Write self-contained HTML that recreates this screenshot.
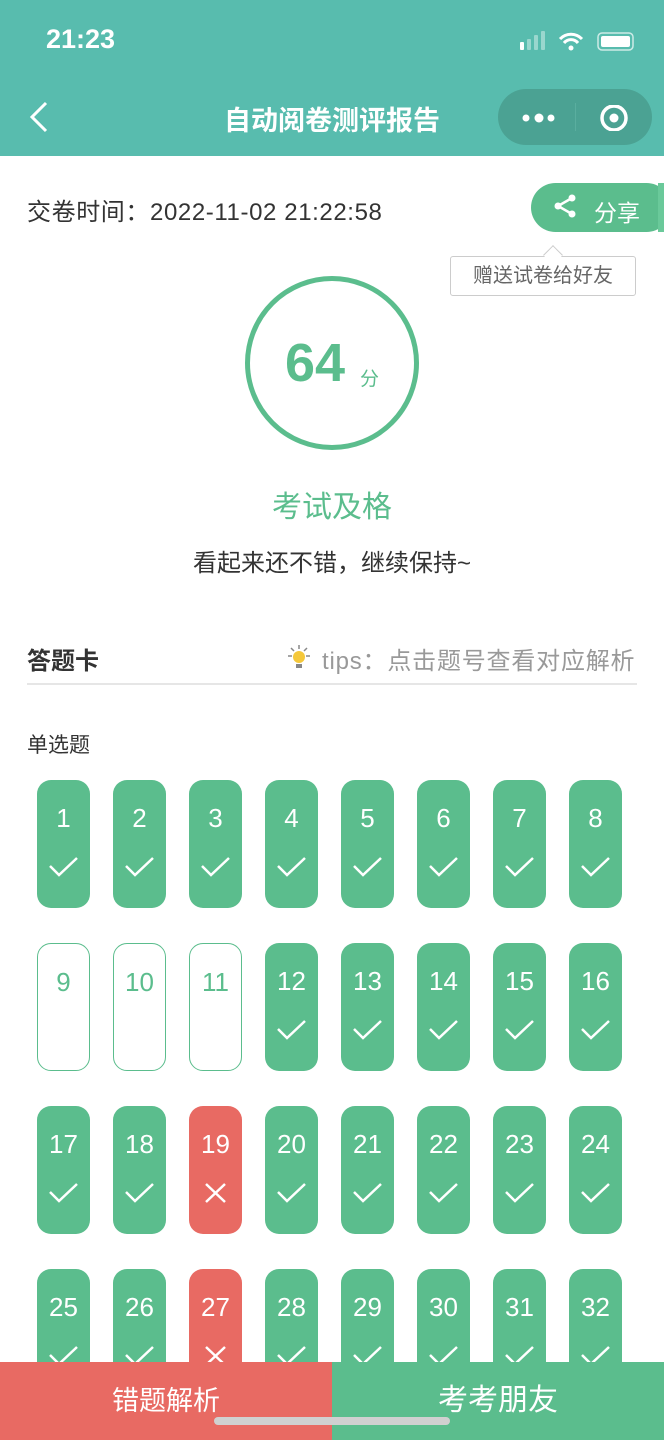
<!DOCTYPE html>
<html><head><meta charset="utf-8"><style>
*{margin:0;padding:0;box-sizing:border-box}
body{width:664px;height:1440px;position:relative;overflow:hidden;background:#fff;font-family:"Liberation Sans","Noto Sans CJK SC",sans-serif}
.a{position:absolute}
.hdr{left:0;top:0;width:664px;height:156px;background:#58bcae}
.t{position:absolute;width:53px;height:128px;border-radius:14px;background:#5bbd8d;color:#fff;text-align:center}
.t b{display:block;font-weight:normal;font-size:26px;line-height:26px;margin-top:25px}
.t svg{position:absolute;left:11px;top:76px}
.o{background:#fff;border:1.5px solid #5bbd8d;color:#5bbd8d}
.r{background:#e86a63}
</style></head><body>
<div class="a hdr"></div>
<div class="a" style="left:46px;top:24px;color:#fff;font-size:27px;font-weight:bold">21:23</div>
<svg class="a" style="left:518px;top:30px" width="120" height="24">
<rect x="2" y="12" width="4" height="8" rx="1" fill="#fff"/><rect x="9" y="9" width="4" height="11" rx="1" fill="#fff" opacity=".4"/><rect x="16" y="5" width="4" height="15" rx="1" fill="#fff" opacity=".4"/><rect x="23" y="1" width="4" height="19" rx="1" fill="#fff" opacity=".4"/>
<path d="M42 9a15 15 0 0 1 22 0M46 13a9 9 0 0 1 14 0" stroke="#fff" stroke-width="3" fill="none"/><circle cx="53" cy="18" r="2.5" fill="#fff"/>
<rect x="80" y="3" width="35" height="17" rx="4" fill="none" stroke="#fff" stroke-width="1.5" opacity=".7"/><rect x="83" y="6" width="29" height="11" rx="2" fill="#fff"/>
</svg>
<svg class="a" style="left:28px;top:100px" width="22" height="34"><path d="M18 3L4 17l14 14" stroke="#fff" stroke-width="3" fill="none"/></svg>
<div class="a" style="left:0;width:664px;top:99px;text-align:center;color:#fff;font-size:27px;font-weight:bold">自动阅卷测评报告</div>
<div class="a" style="left:498px;top:89px;width:154px;height:56px;border-radius:28px;background:#4ba293"></div>
<div class="a" style="left:575px;top:103px;width:1px;height:28px;background:#5aae9f"></div>
<svg class="a" style="left:518px;top:105px" width="120" height="26"><circle cx="8" cy="13" r="3.5" fill="#fff"/><circle cx="21" cy="13" r="4.5" fill="#fff"/><circle cx="33" cy="13" r="3.5" fill="#fff"/><circle cx="96" cy="13" r="12" fill="none" stroke="#fff" stroke-width="3.5"/><circle cx="96" cy="13" r="4.5" fill="#fff"/></svg>
<div class="a" style="left:27px;top:192px;font-size:24px;color:#333;letter-spacing:0.6px">交卷时间：2022-11-02 21:22:58</div>
<div class="a" style="left:531px;top:183px;width:140px;height:49px;border-radius:25px;background:#5bbd8d"></div>
<div class="a" style="left:658px;top:183px;width:6px;height:49px;background:#6ac99a"></div>
<svg class="a" style="left:553px;top:193px" width="26" height="26"><circle cx="19" cy="5" r="3.5" fill="#fff"/><circle cx="5" cy="13" r="3.5" fill="#fff"/><circle cx="19" cy="21" r="3.5" fill="#fff"/><path d="M19 5L5 13l14 8" stroke="#fff" stroke-width="2.5" fill="none"/></svg>
<div class="a" style="left:594px;top:194px;font-size:23px;color:#fff">分享</div>
<div class="a" style="left:450px;top:256px;width:186px;height:40px;border:1px solid #ccc;border-radius:3px;background:#fff;font-size:20px;color:#666;text-align:center;line-height:38px">赠送试卷给好友</div>
<div class="a" style="left:546px;top:248px;width:14px;height:14px;background:#fff;border-left:1px solid #ccc;border-top:1px solid #ccc;transform:rotate(45deg)"></div>
<div class="a" style="left:245px;top:276px;width:174px;height:174px;border-radius:50%;border:5px solid #5bbd8d"></div>
<div class="a" style="left:285px;top:332px;font-size:54px;color:#5bbd8d;font-weight:bold">64</div>
<div class="a" style="left:360px;top:364px;font-size:19px;color:#5bbd8d">分</div>
<div class="a" style="left:0;width:664px;top:482px;text-align:center;font-size:30px;color:#5bbd8d">考试及格</div>
<div class="a" style="left:0;width:664px;top:543px;text-align:center;font-size:24px;color:#333">看起来还不错，继续保持~</div>
<div class="a" style="left:27px;top:641px;font-size:24px;font-weight:bold;color:#333">答题卡</div>
<svg class="a" style="left:284px;top:643px" width="30" height="30"><path d="M15 2v4M4 13h4M22 13h4M7 5l3 3M23 5l-3 3" stroke="#888" stroke-width="1.5"/><circle cx="15" cy="14" r="6" fill="#f5c83a"/><rect x="12" y="21" width="6" height="4" fill="#888"/></svg>
<div class="a" style="left:322px;top:641px;font-size:24px;color:#999;letter-spacing:0.8px">tips：点击题号查看对应解析</div>
<div class="a" style="left:27px;top:683px;width:610px;height:2px;background:#e6e6e6"></div>
<div class="a" style="left:27px;top:729px;font-size:21px;color:#333">单选题</div>

<div class="a" style="left:0;top:780px">
<div class="t" style="left:37px"><b>1</b><svg width="31" height="22"><path d="M2 10l9 9L29 2" stroke="#fff" stroke-width="2.5" fill="none"/></svg></div>
<div class="t" style="left:113px"><b>2</b><svg width="31" height="22"><path d="M2 10l9 9L29 2" stroke="#fff" stroke-width="2.5" fill="none"/></svg></div>
<div class="t" style="left:189px"><b>3</b><svg width="31" height="22"><path d="M2 10l9 9L29 2" stroke="#fff" stroke-width="2.5" fill="none"/></svg></div>
<div class="t" style="left:265px"><b>4</b><svg width="31" height="22"><path d="M2 10l9 9L29 2" stroke="#fff" stroke-width="2.5" fill="none"/></svg></div>
<div class="t" style="left:341px"><b>5</b><svg width="31" height="22"><path d="M2 10l9 9L29 2" stroke="#fff" stroke-width="2.5" fill="none"/></svg></div>
<div class="t" style="left:417px"><b>6</b><svg width="31" height="22"><path d="M2 10l9 9L29 2" stroke="#fff" stroke-width="2.5" fill="none"/></svg></div>
<div class="t" style="left:493px"><b>7</b><svg width="31" height="22"><path d="M2 10l9 9L29 2" stroke="#fff" stroke-width="2.5" fill="none"/></svg></div>
<div class="t" style="left:569px"><b>8</b><svg width="31" height="22"><path d="M2 10l9 9L29 2" stroke="#fff" stroke-width="2.5" fill="none"/></svg></div>
</div>
<div class="a" style="left:0;top:943px">
<div class="t o" style="left:37px"><b>9</b></div>
<div class="t o" style="left:113px"><b>10</b></div>
<div class="t o" style="left:189px"><b>11</b></div>
<div class="t" style="left:265px"><b>12</b><svg width="31" height="22"><path d="M2 10l9 9L29 2" stroke="#fff" stroke-width="2.5" fill="none"/></svg></div>
<div class="t" style="left:341px"><b>13</b><svg width="31" height="22"><path d="M2 10l9 9L29 2" stroke="#fff" stroke-width="2.5" fill="none"/></svg></div>
<div class="t" style="left:417px"><b>14</b><svg width="31" height="22"><path d="M2 10l9 9L29 2" stroke="#fff" stroke-width="2.5" fill="none"/></svg></div>
<div class="t" style="left:493px"><b>15</b><svg width="31" height="22"><path d="M2 10l9 9L29 2" stroke="#fff" stroke-width="2.5" fill="none"/></svg></div>
<div class="t" style="left:569px"><b>16</b><svg width="31" height="22"><path d="M2 10l9 9L29 2" stroke="#fff" stroke-width="2.5" fill="none"/></svg></div>
</div>
<div class="a" style="left:0;top:1106px">
<div class="t" style="left:37px"><b>17</b><svg width="31" height="22"><path d="M2 10l9 9L29 2" stroke="#fff" stroke-width="2.5" fill="none"/></svg></div>
<div class="t" style="left:113px"><b>18</b><svg width="31" height="22"><path d="M2 10l9 9L29 2" stroke="#fff" stroke-width="2.5" fill="none"/></svg></div>
<div class="t r" style="left:189px"><b>19</b><svg width="31" height="22"><path d="M6 2l19 18M25 2L6 20" stroke="#fff" stroke-width="2.5" fill="none"/></svg></div>
<div class="t" style="left:265px"><b>20</b><svg width="31" height="22"><path d="M2 10l9 9L29 2" stroke="#fff" stroke-width="2.5" fill="none"/></svg></div>
<div class="t" style="left:341px"><b>21</b><svg width="31" height="22"><path d="M2 10l9 9L29 2" stroke="#fff" stroke-width="2.5" fill="none"/></svg></div>
<div class="t" style="left:417px"><b>22</b><svg width="31" height="22"><path d="M2 10l9 9L29 2" stroke="#fff" stroke-width="2.5" fill="none"/></svg></div>
<div class="t" style="left:493px"><b>23</b><svg width="31" height="22"><path d="M2 10l9 9L29 2" stroke="#fff" stroke-width="2.5" fill="none"/></svg></div>
<div class="t" style="left:569px"><b>24</b><svg width="31" height="22"><path d="M2 10l9 9L29 2" stroke="#fff" stroke-width="2.5" fill="none"/></svg></div>
</div>
<div class="a" style="left:0;top:1269px">
<div class="t" style="left:37px"><b>25</b><svg width="31" height="22"><path d="M2 10l9 9L29 2" stroke="#fff" stroke-width="2.5" fill="none"/></svg></div>
<div class="t" style="left:113px"><b>26</b><svg width="31" height="22"><path d="M2 10l9 9L29 2" stroke="#fff" stroke-width="2.5" fill="none"/></svg></div>
<div class="t r" style="left:189px"><b>27</b><svg width="31" height="22"><path d="M6 2l19 18M25 2L6 20" stroke="#fff" stroke-width="2.5" fill="none"/></svg></div>
<div class="t" style="left:265px"><b>28</b><svg width="31" height="22"><path d="M2 10l9 9L29 2" stroke="#fff" stroke-width="2.5" fill="none"/></svg></div>
<div class="t" style="left:341px"><b>29</b><svg width="31" height="22"><path d="M2 10l9 9L29 2" stroke="#fff" stroke-width="2.5" fill="none"/></svg></div>
<div class="t" style="left:417px"><b>30</b><svg width="31" height="22"><path d="M2 10l9 9L29 2" stroke="#fff" stroke-width="2.5" fill="none"/></svg></div>
<div class="t" style="left:493px"><b>31</b><svg width="31" height="22"><path d="M2 10l9 9L29 2" stroke="#fff" stroke-width="2.5" fill="none"/></svg></div>
<div class="t" style="left:569px"><b>32</b><svg width="31" height="22"><path d="M2 10l9 9L29 2" stroke="#fff" stroke-width="2.5" fill="none"/></svg></div>
</div>

<div class="a" style="left:0;top:1362px;width:332px;height:78px;background:#e86a63;color:#fff;font-size:27px;text-align:center;line-height:78px">错题解析</div>
<div class="a" style="left:332px;top:1362px;width:332px;height:78px;background:#5bbd8d;color:#fff;font-size:30px;text-align:center;line-height:78px">考考朋友</div>
<div class="a" style="left:214px;top:1417px;width:236px;height:8px;border-radius:4px;background:#d0d0d0"></div>
</body></html>
